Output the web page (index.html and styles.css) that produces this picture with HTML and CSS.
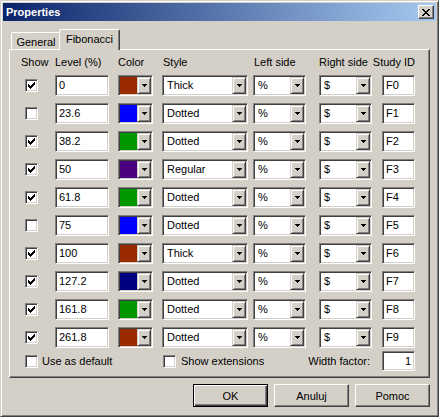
FILE: index.html
```html
<!DOCTYPE html>
<html lang="en">
<head>
  <meta charset="UTF-8" />
  <title>Properties</title>
  <link rel="stylesheet" href="styles.css">
</head>
<body>
  <div class="window">
    <div class="titlebar">
      <span class="title">Properties</span>
      <button class="close-btn">
        <svg width="8" height="7" viewBox="0 0 8 7" shape-rendering="crispEdges">
          <path d="M0 0h2v1h-2z M6 0h2v1h-2z M1 1h2v1h-2z M5 1h2v1h-2z M2 2h4v1h-4z M3 3h2v1h-2z M2 4h4v1h-4z M1 5h2v1h-2z M5 5h2v1h-2z M0 6h2v1h-2z M6 6h2v1h-2z" fill="#000"/>
        </svg>
      </button>
    </div>

    <div class="dialog-body">
      <div class="tabs">
        <div class="tab">General</div>
        <div class="tab active">Fibonacci</div>
      </div>

      <div class="panel">
        <div class="levels" id="levels">
          <div class="col-head head-show">Show</div>
          <div class="col-head">Level (%)</div>
          <div class="col-head">Color</div>
          <div class="col-head head-style">Style</div>
          <div class="col-head head-left">Left side</div>
          <div class="col-head">Right side</div>
          <div class="col-head head-id">Study ID</div>
        </div>

        <div class="footer-row">
          <label class="opt opt-default"><span class="check"></span>Use as default</label>
          <label class="opt opt-ext"><span class="check"></span>Show extensions</label>
          <span class="width-label">Width factor:</span>
          <div class="field field-num">1</div>
        </div>
      </div>

      <div class="buttons">
        <button class="btn btn-default">OK</button>
        <button class="btn">Anuluj</button>
        <button class="btn">Pomoc</button>
      </div>
    </div>
  </div>

  <script>
    const levels = [
      { show: true,  level: "0",     color: "#9a2a00", style: "Thick" },
      { show: false, level: "23.6",  color: "#0000ff", style: "Dotted" },
      { show: true,  level: "38.2",  color: "#009600", style: "Dotted" },
      { show: true,  level: "50",    color: "#4b0082", style: "Regular" },
      { show: true,  level: "61.8",  color: "#009600", style: "Dotted" },
      { show: false, level: "75",    color: "#0000ff", style: "Dotted" },
      { show: true,  level: "100",   color: "#9a2a00", style: "Thick" },
      { show: true,  level: "127.2", color: "#000080", style: "Dotted" },
      { show: true,  level: "161.8", color: "#009600", style: "Dotted" },
      { show: true,  level: "261.8", color: "#9a2a00", style: "Dotted" }
    ];

    const checkMark = '<svg width="7" height="7" viewBox="0 0 7 7" shape-rendering="crispEdges"><path d="M6 0h1v1h-1z M5 1h2v1h-2z M0 2h1v1h-1z M4 2h3v1h-3z M0 3h2v1h-2z M3 3h3v1h-3z M0 4h5v1h-5z M1 5h3v1h-3z M2 6h1v1h-1z" fill="#000"/></svg>';
    const arrow = '<svg width="5" height="3" viewBox="0 0 5 3" shape-rendering="crispEdges"><path d="M0 0h5v1h-5z M1 1h3v1h-3z M2 2h1v1h-1z" fill="#000"/></svg>';

    const grid = document.getElementById("levels");

    // small helper for the dropdown boxes
    function combo(cls, inner) {
      return '<div class="combo ' + cls + '">' + inner +
             '<span class="combo-btn">' + arrow + '</span></div>';
    }

    levels.forEach((row, i) => {
      const cells = [
        '<div class="cell-check"><span class="check">' + (row.show ? checkMark : '') + '</span></div>',
        '<div class="field field-level">' + row.level + '</div>',
        combo('combo-color', '<span class="swatch" style="background:' + row.color + '"></span>'),
        combo('combo-style', '<span class="combo-text">' + row.style + '</span>'),
        combo('combo-side', '<span class="combo-text">%</span>'),
        combo('combo-side', '<span class="combo-text">$</span>'),
        '<div class="field field-id">F' + i + '</div>'
      ];
      grid.insertAdjacentHTML("beforeend", cells.join(""));
    });
  </script>
</body>
</html>
```

FILE: styles.css
```css
:root {
  --face: #d4d0c8;
  --light: #ffffff;
  --shadow: #808080;
  --dark: #404040;
}

* {
  box-sizing: border-box;
}

body {
  margin: 0;
  font-family: "Liberation Sans", Arial, sans-serif;
  font-size: 11px;
  color: #000;
  background-color: var(--face);
}

/* window frame */
.window {
  width: 439px;
  height: 417px;
  padding: 2px;
  background-color: var(--face);
  border: 1px solid;
  border-color: var(--face) var(--dark) var(--dark) var(--face);
  box-shadow: inset 1px 1px var(--light), inset -1px -1px var(--shadow);
}

.titlebar {
  height: 18px;
  display: flex;
  align-items: center;
  justify-content: space-between;
  padding: 0 2px 0 3px;
  background: linear-gradient(90deg, #0a246a, #a6caf0);
  color: #fff;
  font-weight: bold;
}

.close-btn {
  width: 16px;
  height: 14px;
  padding: 0;
  display: flex;
  align-items: center;
  justify-content: center;
  background-color: var(--face);
  border: 1px solid;
  border-color: var(--light) var(--dark) var(--dark) var(--light);
  box-shadow: inset -1px -1px var(--shadow);
}

.dialog-body {
  padding: 8px 6px 0;
}

/* tabs */
.tabs {
  display: flex;
  align-items: flex-end;
  height: 20px;
  padding-left: 2px;
  position: relative;
  z-index: 1;
}

.tab {
  height: 17px;
  width: 50px;
  padding-top: 3px;
  text-align: center;
  background-color: var(--face);
  border: 1px solid;
  border-bottom: none;
  border-color: var(--light) var(--dark) transparent var(--light);
  border-radius: 2px 2px 0 0;
  box-shadow: inset -1px 0 var(--shadow);
}

.tab.active {
  width: 61px;
  height: 21px;
  margin-left: -2px;
  margin-bottom: -1px;
  padding-top: 3px;
}

/* tab page */
.panel {
  height: 329px;
  padding: 7px 0 0 8px;
  border: 1px solid;
  border-color: var(--light) var(--dark) var(--dark) var(--light);
  box-shadow: inset -1px -1px var(--shadow);
}

.levels,
.footer-row {
  display: grid;
  grid-template-columns: 37px 63px 44px 91px 66px 63px 33px;
  align-items: center;
}

.levels {
  grid-template-rows: 11px repeat(10, 21px);
  row-gap: 7px;
}

.col-head {
  line-height: 11px;
  white-space: nowrap;
}

.head-show {
  margin-left: 3px;
}

.head-style,
.head-left {
  margin-left: 1px;
}

.head-id {
  justify-self: end;
}

.cell-check {
  padding-left: 7px;
  display: flex;
}

/* sunken controls */
.check,
.field,
.combo {
  background-color: #fff;
  border: 1px solid;
  border-color: var(--shadow) var(--light) var(--light) var(--shadow);
  box-shadow: inset 1px 1px var(--dark), inset -1px -1px var(--face);
}

.check {
  width: 13px;
  height: 13px;
  flex: none;
  display: inline-flex;
  align-items: center;
  justify-content: center;
}

.field {
  height: 21px;
  line-height: 19px;
  padding: 0 3px;
  white-space: nowrap;
}

.field-level {
  width: 54px;
}

.field-id {
  width: 33px;
}

.combo {
  height: 21px;
  padding: 1px;
  display: flex;
}

.combo-color {
  width: 35px;
}

.combo-style {
  width: 86px;
}

.combo-side {
  width: 53px;
}

.swatch {
  flex: 1;
}

.combo-text {
  flex: 1;
  padding-left: 3px;
  line-height: 17px;
}

.combo-btn {
  width: 14px;
  display: flex;
  align-items: center;
  justify-content: center;
  background-color: var(--face);
  border: 1px solid;
  border-color: var(--face) var(--dark) var(--dark) var(--face);
  box-shadow: inset 1px 1px var(--light), inset -1px -1px var(--shadow);
}

/* options under the table */
.footer-row {
  margin-top: 3px;
  height: 20px;
}

.opt {
  display: flex;
  align-items: center;
  white-space: nowrap;
}

.opt-default {
  grid-column: 1 / 4;
  padding-left: 7px;
  gap: 4px;
}

.opt-ext {
  grid-column: 4 / 5;
  padding-left: 1px;
  gap: 5px;
}

.width-label {
  grid-column: 5 / 7;
  justify-self: end;
  padding-right: 12px;
}

.field-num {
  width: 33px;
  height: 20px;
  line-height: 18px;
  text-align: right;
}

/* dialog buttons */
.buttons {
  display: flex;
  justify-content: flex-end;
  gap: 6px;
  margin-top: 6px;
}

.btn {
  width: 75px;
  height: 23px;
  padding: 0;
  font: inherit;
  color: #000;
  background-color: var(--face);
  border: 1px solid;
  border-color: var(--light) var(--dark) var(--dark) var(--light);
  box-shadow: inset -1px -1px var(--shadow);
}

.btn-default {
  border-color: #000;
  box-shadow: inset 1px 1px var(--light), inset -1px -1px var(--dark), inset -2px -2px var(--shadow);
}
```
